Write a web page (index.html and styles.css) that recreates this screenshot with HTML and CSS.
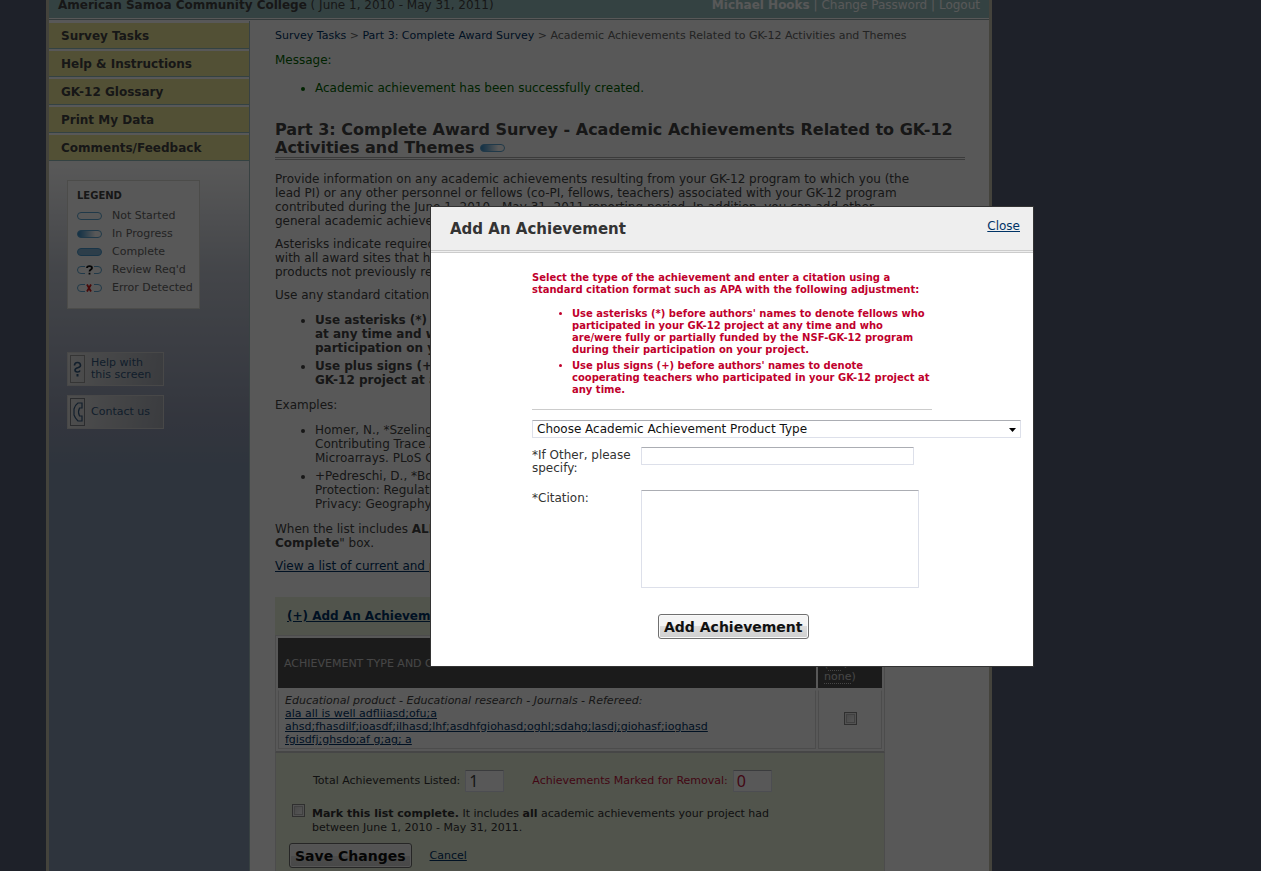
FILE: index.html
```html
<!DOCTYPE html>
<html lang="en">
<head>
<meta charset="utf-8">
<title>Part 3: Complete Award Survey</title>
<link rel="stylesheet" href="styles.css">
</head>
<body>
<svg class="defs" width="0" height="0" aria-hidden="true">
  <defs>
    <linearGradient id="half"><stop offset="0" stop-color="#2f8ac9"/><stop offset=".3" stop-color="#7db6dc"/><stop offset=".75" stop-color="#fff"/></linearGradient>
  </defs>
</svg>
<div class="page">
  <header class="topbar">
    <div><strong>American Samoa Community College</strong> ( June 1, 2010 - May 31, 2011)</div>
    <div class="account"><strong>Michael Hooks</strong> | <a href="#">Change Password</a> | <a href="#">Logout</a></div>
  </header>
  <div class="columns">
    <aside class="sidebar">
      <nav class="menu">
        <a href="#">Survey Tasks</a>
        <a href="#">Help &amp; Instructions</a>
        <a href="#">GK-12 Glossary</a>
        <a href="#">Print My Data</a>
        <a href="#">Comments/Feedback</a>
      </nav>
      <section class="legend">
        <h2>LEGEND</h2>
        <ul>
          <li><svg width="26" height="10" viewBox="0 0 26 10"><rect x=".5" y="1.5" width="24" height="7" rx="3.5" fill="none" stroke="#5ea5d2"/></svg>Not Started</li>
          <li><svg width="26" height="10" viewBox="0 0 26 10"><rect x=".5" y="1.5" width="24" height="7" rx="3.5" fill="url(#half)" stroke="#5ea5d2"/></svg>In Progress</li>
          <li><svg width="26" height="10" viewBox="0 0 26 10"><rect x=".5" y="1.5" width="24" height="7" rx="3.5" fill="#84b4d6" stroke="#4a9ad0"/></svg>Complete</li>
          <li><svg width="26" height="10" viewBox="0 0 26 10"><path d="M8 1.5H4a3.5 3.5 0 0 0 0 7h4M17 1.5h4a3.5 3.5 0 0 1 0 7h-4" fill="none" stroke="#5ea5d2"/><path d="M10 3c0-2.600 5-2.600 5 0 0 1.500-2.500 1.500-2.500 3.500M12.500 7.800v1.700" fill="none" stroke="#111" stroke-width="1.800"/></svg>Review Req'd</li>
          <li><svg width="26" height="10" viewBox="0 0 26 10"><path d="M8 1.500H4a3.500 3.500 0 0 0 0 7h4M17 1.500h4a3.500 3.500 0 0 1 0 7h-4" fill="none" stroke="#5ea5d2"/><path d="M10 1.500l4 7M14 1.500l-4 7" fill="none" stroke="#d01818" stroke-width="1.800"/></svg>Error Detected</li>
        </ul>
      </section>
      <div class="helpers">
        <a href="#"><svg width="15" height="28" viewBox="0 0 15 28"><rect x=".5" y=".5" width="14" height="27" fill="none" stroke="#9a9a9a"/><path d="M4.500 10.500c0-4 6-4 6 0 0 3-5.500 1.500-5.500 4.500 0 2.500 4.500 2.500 5 .5" fill="none" stroke="#33587e" stroke-width="1.600"/><path d="M7.500 19v2.500" stroke="#33587e" stroke-width="2"/></svg><span>Help with<br>this screen</span></a>
        <a href="#"><svg width="15" height="28" viewBox="0 0 15 28"><rect x=".5" y=".5" width="14" height="27" fill="none" stroke="#7c7f85"/><path d="M8 5h4v5H9.500q-2 4 0 8H12v5H8q-3-3-4-6v-6q1-4 4-6z" fill="none" stroke="#33587e" stroke-width="1.200"/></svg><span>Contact us</span></a>
      </div>
    </aside>
    <main class="content">
      <div class="crumbs"><a href="#">Survey Tasks</a> &gt; <a href="#">Part 3: Complete Award Survey</a> &gt; Academic Achievements Related to GK-12 Activities and Themes</div>
      <div class="message">Message:
        <ul><li>Academic achievement has been successfully created.</li></ul>
      </div>
      <h1>Part 3: Complete Award Survey - Academic Achievements Related to GK-12<br>Activities and Themes <svg width="26" height="10" viewBox="0 0 26 10"><rect x=".5" y="1.500" width="24" height="7" rx="3.500" fill="url(#half)" stroke="#5ea5d2"/></svg></h1>
      <p>Provide information on any academic achievements resulting from your GK-12 program to which you (the<br>lead PI) or any other personnel or fellows (co-PI, fellows, teachers) associated with your GK-12 program<br>contributed during the June 1, 2010 - May 31, 2011 reporting period. In addition, you can add other<br>general academic achievements.</p>
      <p>Asterisks indicate required fields.<br>with all award sites that have<br>products not previously reported.</p>
      <p>Use any standard citation format.</p>
      <ul class="strong">
        <li>Use asterisks (*) before<br>at any time and who<br>participation on your project.</li>
        <li>Use plus signs (+) before<br>GK-12 project at any time.</li>
      </ul>
      <p>Examples:</p>
      <ul>
        <li>Homer, N., *Szelinger, S.<br>Contributing Trace Amounts<br>Microarrays. PLoS Genetics</li>
        <li>+Pedreschi, D., *Bonchi, F.<br>Protection: Regulations and<br>Privacy: Geography</li>
      </ul>
      <p>When the list includes <strong>ALL</strong><br><strong>Complete</strong>" box.</p>
      <p><a href="#">View a list of current and past</a></p>

      <form class="list">
        <div class="list-head"><a href="#">(+) Add An Achievement</a></div>
        <table>
          <thead><tr><th>ACHIEVEMENT TYPE AND CITATION</th><th class="mark">Remove<br>(<abbr>all</abbr> /<br><abbr>none</abbr>)</th></tr></thead>
          <tbody><tr>
            <td><em>Educational product - Educational research - Journals - Refereed:</em><br><a href="#">ala all is well adfliiasd;ofu;a<br>ahsd;fhasdilf;ioasdf;ilhasd;lhf;asdhfgiohasd;oghl;sdahg;lasdj;giohasf;ioghasd<br>fgisdfj;ghsdo;af g;ag; a</a></td>
            <td class="mark"><input type="checkbox" aria-label="Remove achievement"></td>
          </tr></tbody>
        </table>
        <div class="list-foot">
          <div class="totals">
            <label for="total">Total Achievements Listed:</label><input id="total" value="1">
            <label class="red" for="removed">Achievements Marked for Removal:</label><input class="red" id="removed" value="0">
          </div>
          <div class="complete">
            <input type="checkbox" id="done">
            <label for="done"><strong>Mark this list complete.</strong> It includes <strong>all</strong> academic achievements your project had<br>between June 1, 2010 - May 31, 2011.</label>
          </div>
          <div class="actions"><button type="button">Save Changes</button><a href="#">Cancel</a></div>
        </div>
      </form>
    </main>
  </div>
</div>
<div class="shade"></div>
<div class="dialog" role="dialog" aria-labelledby="dlg">
  <div class="dialog-head"><h2 id="dlg">Add An Achievement</h2><a href="#">Close</a></div>
  <form class="dialog-body">
    <div class="note">
      <p>Select the type of the achievement and enter a citation using a<br>standard citation format such as APA with the following adjustment:</p>
      <ul>
        <li>Use asterisks (*) before authors' names to denote fellows who<br>participated in your GK-12 project at any time and who<br>are/were fully or partially funded by the NSF-GK-12 program<br>during their participation on your project.</li>
        <li>Use plus signs (+) before authors' names to denote<br>cooperating teachers who participated in your GK-12 project at<br>any time.</li>
      </ul>
    </div>
    <div class="select-wrap">
      <select aria-label="Achievement product type"><option>Choose Academic Achievement Product Type</option></select>
      <svg width="7" height="4" viewBox="0 0 7 4"><path d="M0 0h7L3.500 4z"/></svg>
    </div>
    <div class="fields">
      <label for="other">*If Other, please specify:</label><input id="other">
      <label for="cite">*Citation:</label><textarea id="cite"></textarea>
    </div>
    <button type="button">Add Achievement</button>
  </form>
</div>
</body>
</html>
```
FILE: styles.css
```css
* { box-sizing: border-box; }
body {
  margin: 0;
  height: 100vh;
  overflow: hidden;
  background: #576077;
  color: #444;
  font: 12px/14px "DejaVu Sans", Verdana, sans-serif;
}
a { color: #036; }
.defs { position: absolute; }
.page {
  width: 75%;
  min-width: 946px;
  height: 100vh;
  overflow: hidden;
  margin-left: 46px;
  background: #fff;
  border: 3px solid #c5c2ad;
  border-width: 0 3px;
}
.topbar {
  display: flex;
  justify-content: space-between;
  padding: 0 9px 7px;
  background: #97bfbf;
  font-size: 12px;
  line-height: 11px;
  box-shadow: 0 1px #fff, 0 2px #97a9ac;
}
.account, .account a { color: #fff; text-decoration: none; }
.columns { display: flex; padding-top: 3px; }
.sidebar {
  flex: none;
  width: 201px;
  min-height: 100vh;
  border-right: 1px solid #a3bcbf;
  background: linear-gradient(#fff 145px, #c4c9d4 250px, #949cb3 400px, #8597b1 450px);
}
.menu a {
  display: block;
  margin-top: 2px;
  height: 26px;
  padding-left: 12px;
  background: #ede899;
  border-bottom: 1px solid #97bfbf;
  color: #444;
  font-weight: bold;
  line-height: 26px;
  text-decoration: none;
}
.legend {
  width: 133px;
  height: 129px;
  margin: 19px 0 0 18px;
  padding: 9px 0 0 9px;
  border: 1px solid #dcdcd6;
  background: #fff;
  font-size: 11px;
  white-space: nowrap;
}
.legend h2 { margin: 0 0 5px; font-size: 10px; line-height: 12px; }
.legend ul { margin: 0; padding: 0; list-style: none; }
.legend li { display: flex; align-items: center; gap: 9px; margin: 0; height: 18px; color: #666; }
.helpers { display: grid; gap: 9px; margin: 43px 0 0 18px; width: 97px; }
.helpers a {
  display: flex;
  align-items: center;
  gap: 6px;
  height: 34px;
  padding-left: 2px;
  border: 1px solid #d0d0d0;
  background: linear-gradient(100deg, #e2e2e2, #a9adb6);
  color: #33587e;
  font-size: 11px;
  line-height: 12px;
  text-decoration: none;
  white-space: nowrap;
}
.content { flex: 1; min-width: 0; padding: 9px 24px 0 25px; white-space: nowrap; }
.crumbs { font-size: 11px; line-height: 12px; color: #666; }
.crumbs a { text-decoration: none; }
.message { margin-top: 11px; color: #060; }
p { margin: 0 0 9px; }
ul { margin: 11px 0; padding-left: 40px; }
li + li { margin-top: 4px; }
.message ul { margin-top: 14px; }
h1 {
  margin: 26px 0 12px;
  border-bottom: 3px double #aaa;
  font-size: 16px;
  line-height: 18px;
}
.strong { font-weight: bold; }
.list { width: 610px; margin-top: 24px; font-size: 11px; line-height: 13px; background: #e9f2dc; }
.list-head { padding: 13px 12px 12px; font-size: 12px; line-height: 13px; font-weight: bold; }
table { width: 100%; border: 1px solid #ddd; border-bottom: 2px solid #ccc; border-spacing: 2px; background: #fff; }
th { height: 50px; padding: 0 6px; background: #505050; color: #ccc; text-align: left; font-weight: normal; font-size: 11px; }
td { padding: 3px 6px 2px; border: 1px solid #ddd; border-top-color: #fff; }
.mark { width: 64px; }
td.mark { text-align: center; }
abbr { border-bottom: 1px dotted #ccc; }
input[type=checkbox] {
  appearance: none;
  width: 13px;
  height: 13px;
  margin: 0;
  flex: none;
  border: 1px solid #888;
  box-shadow: inset 0 0 0 1px #eee, inset 0 0 0 2px #bbb;
  background: linear-gradient(135deg, #ccc, #fff);
}
input:not([type=checkbox]), textarea, select {
  border: 1px solid #dde0ea;
  border-top-color: #abadb3;
  border-radius: 1px;
  background: #fff;
  font: 12px "DejaVu Sans", Verdana, sans-serif;
}
.list-foot { padding: 17px 13px 12px; border: 1px solid #ddd; border-width: 0 1px; color: #333; line-height: 14px; }
.totals { display: flex; align-items: center; padding-left: 24px; }
.totals input:not([type=checkbox]) { width: 39px; height: 22px; margin: 0 28px 0 5px; padding: 0 3px; font-family: "Noto Sans", Tahoma, sans-serif; font-size: 16px; color: #444; }
.totals .red, .totals input.red:not([type=checkbox]) { color: #c0143c; }
.complete { display: flex; gap: 7px; margin: 12px 0 8px 3px; }
.complete label { padding-top: 3px; }
.actions { display: flex; align-items: center; gap: 18px; }
button {
  height: 25px;
  padding: 0 5px;
  border: 1px solid #707070;
  border-radius: 3px;
  background: linear-gradient(#f4f4f4 50%, #dcdcdc 50%, #cfcfcf);
  box-shadow: inset 0 0 0 1px #fafafa;
  color: #111;
  font: bold 14px "DejaVu Sans", Verdana, sans-serif;
}
.shade { position: fixed; inset: 0; background: rgba(0, 0, 0, .655); }
.dialog {
  position: fixed;
  left: 430px;
  top: 206px;
  width: 604px;
  background: #fff;
  border: 1px solid #333;
  white-space: nowrap;
}
.dialog-head {
  display: flex;
  justify-content: space-between;
  padding: 12px 13px 11px 19px;
  background: #eee;
  border-bottom: 3px double #ccc;
}
.dialog-head h2 { margin: 0; color: #333; font-size: 15px; line-height: 20px; }
.dialog-body { padding: 19px 12px 27px 101px; line-height: 13px; color: #333; }
.note {
  width: 400px;
  border-bottom: 1px solid #ccc;
  padding-bottom: 13px;
  color: #c0002c;
  font-size: 10px;
  font-weight: bold;
  line-height: 12px;
}
.note p { margin: 0; }
.note ul { margin: 12px 0 0; }
.select-wrap { position: relative; margin-top: 10px; }
.select-wrap select { display: block; width: 100%; height: 18px; padding: 0 4px; appearance: none; color: #111; }
.select-wrap svg { position: absolute; right: 5px; top: 8px; }
.fields { display: grid; grid-template-columns: 104px 278px; gap: 15px 5px; margin: 9px 0 26px; }
.fields label { padding-top: 2px; white-space: normal; }
.fields input { width: 273px; height: 18px; }
.fields textarea { height: 98px; resize: none; }
.dialog-body button { display: block; margin-left: 126px; }
```
